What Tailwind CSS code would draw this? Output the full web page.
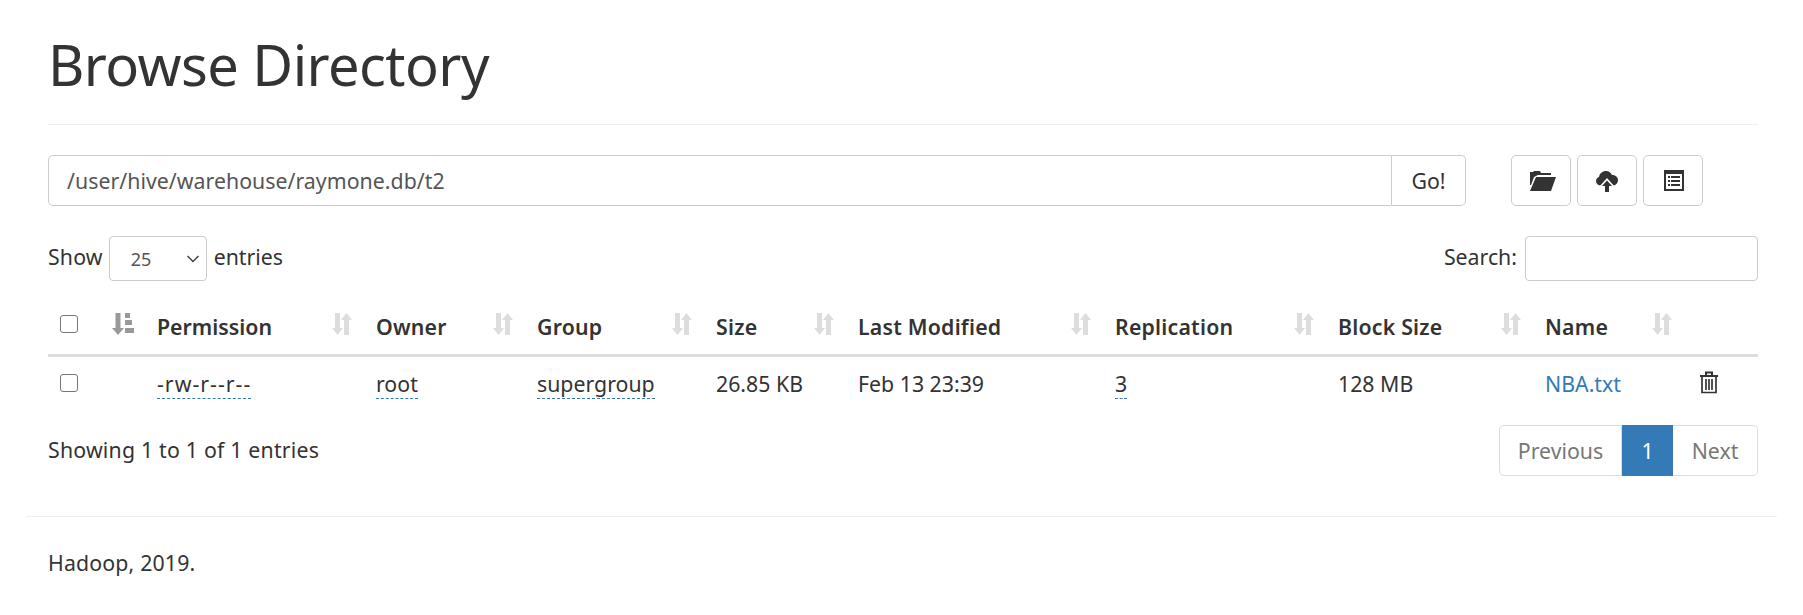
<!DOCTYPE html>
<html>
<head>
<meta charset="utf-8">
<script src="https://cdn.jsdelivr.net/npm/@tailwindcss/browser@4"></script>
</head>
<body class="bg-white text-[#333] font-['Noto_Sans',sans-serif] text-[21.3px] leading-[28px]">
<div class="w-[1803px] h-[615px] overflow-hidden">
  <div class="ml-[23px] mr-[23px] pl-[25px] pr-[22px]">
    <div class="pt-[31px] h-[125px] border-b border-[#eee]">
      <h1 class="text-[56px] leading-[66px] font-normal tracking-[-0.55px]">Browse Directory</h1>
    </div>
    <div class="flex mt-[30px] h-[51px]">
      <div class="flex w-[1418px]">
        <div class="flex-1 border border-[#ccc] rounded-l-[5px] px-[18px] flex items-center text-[#555] tracking-[0.03px]">/user/hive/warehouse/raymone.db/t2</div>
        <div class="w-[74px] border border-l-0 border-[#ccc] rounded-r-[5px] flex items-center justify-center">Go!</div>
      </div>
      <div class="flex gap-[6px] ml-[45px]">
        <div class="w-[60px] border border-[#ccc] rounded-[5px] flex items-center justify-center">
          <svg class="ml-[3px]" width="26" height="20" viewBox="0 0 26 20" fill="#333"><path d="M0 1h3l1-1h6l1 2h10v2H8L4 6 1 14H0zM6 6h20l-5 14H0z"/></svg>
        </div>
        <div class="w-[60px] border border-[#ccc] rounded-[5px] flex items-center justify-center">
          <svg width="22" height="22" viewBox="0 0 22 22"><path fill="#333" d="M5 15.500C2 15.500 0 13.500 0 11c0-2 1.300-3.500 3-4 .5-3.500 3.500-6 7-6 3 0 5 1.700 6 4 3.200-.2 6 2 6 5.200 0 3-2.500 5.300-5.500 5.300z"/><path fill="#fff" d="M11 8l8 9h-4v5H7v-5H3z"/><path fill="#333" d="M11 10.500l5 5.500h-3v6H9v-6H6z"/></svg>
        </div>
        <div class="w-[60px] border border-[#ccc] rounded-[5px] flex items-center justify-center">
          <svg class="ml-[1px]" width="20" height="21" viewBox="0 0 20 21"><path fill="#333" d="M0 0h20v21H0z"/><path fill="#fff" d="M2 4h16v15H2z"/><path fill="#333" d="M4 6h2v2H4zM7 6h9v2H7zM4 10h2v2H4zM7 10h9v2H7zM4 14h2v2H4zM7 14h9v2H7z"/></svg>
        </div>
      </div>
    </div>
    <div class="flex justify-between items-center mt-[30px] h-[45px]">
      <div class="flex items-center">
        <span class="pb-[4px] tracking-[0.15px]">Show</span>
        <div class="w-[98px] h-[45px] ml-[6px] mr-[7px] border border-[#ccc] rounded-[4px] flex items-center justify-between pl-[21px] pr-[6px] text-[18px] text-[#555]">
          <span>25</span>
          <svg width="14" height="8" viewBox="0 0 14 8" fill="none" stroke="#444" stroke-width="1.500"><path d="M1.500 1l5.500 5.500L12.500 1"/></svg>
        </div>
        <span class="pb-[4px]">entries</span>
      </div>
      <div class="flex items-center">
        <span class="pb-[4px]">Search:</span>
        <div class="w-[233px] h-[45px] ml-[8px] border border-[#ccc] rounded-[4px]"></div>
      </div>
    </div>
    <table class="table-fixed w-[1710px] mt-[14px] border-collapse">
      <colgroup>
        <col class="w-[52px]"><col class="w-[45px]"><col class="w-[219px]"><col class="w-[161px]"><col class="w-[179px]"><col class="w-[142px]"><col class="w-[257px]"><col class="w-[223px]"><col class="w-[207px]"><col class="w-[154px]"><col>
      </colgroup>
      <thead>
        <tr class="h-[60px] border-b-[3px] border-[#ddd] text-left tracking-[0.2px]">
          <th class="pl-[12px] font-normal"><div class="w-[18px] h-[18px] border-[1.5px] border-[#767676] rounded-[3px]"></div></th>
          <th class="pl-[12px]"><svg width="22" height="22" viewBox="0 0 22 22" fill="#999"><path d="M3.500 0h5v15H12l-6 7-6-7h3.500z"/><path d="M13 0h5v5h-5zM13 7h7v5h-7zM13 15h9v5h-9z"/></svg></th>
          <th class="px-[12px] pt-[5px] font-semibold tracking-normal"><div class="flex justify-between items-center">Permission<svg class="-mt-[5px]" width="20" height="22" viewBox="0 0 20 22" fill="#ddd"><path d="M3 0h5v15h3l-5.500 7L0 15h3z"/><path d="M12 22h5V7h3L14.500 0 9 7h3z"/></svg></div></th>
          <th class="px-[12px] pt-[5px] font-semibold"><div class="flex justify-between items-center">Owner<svg class="-mt-[5px]" width="20" height="22" viewBox="0 0 20 22" fill="#ddd"><path d="M3 0h5v15h3l-5.500 7L0 15h3z"/><path d="M12 22h5V7h3L14.500 0 9 7h3z"/></svg></div></th>
          <th class="px-[12px] pt-[5px] font-semibold"><div class="flex justify-between items-center">Group<svg class="-mt-[5px]" width="20" height="22" viewBox="0 0 20 22" fill="#ddd"><path d="M3 0h5v15h3l-5.500 7L0 15h3z"/><path d="M12 22h5V7h3L14.500 0 9 7h3z"/></svg></div></th>
          <th class="px-[12px] pt-[5px] font-semibold"><div class="flex justify-between items-center">Size<svg class="-mt-[5px]" width="20" height="22" viewBox="0 0 20 22" fill="#ddd"><path d="M3 0h5v15h3l-5.500 7L0 15h3z"/><path d="M12 22h5V7h3L14.500 0 9 7h3z"/></svg></div></th>
          <th class="px-[12px] pt-[5px] font-semibold"><div class="flex justify-between items-center">Last Modified<svg class="-mt-[5px]" width="20" height="22" viewBox="0 0 20 22" fill="#ddd"><path d="M3 0h5v15h3l-5.500 7L0 15h3z"/><path d="M12 22h5V7h3L14.500 0 9 7h3z"/></svg></div></th>
          <th class="px-[12px] pt-[5px] font-semibold"><div class="flex justify-between items-center">Replication<svg class="-mt-[5px]" width="20" height="22" viewBox="0 0 20 22" fill="#ddd"><path d="M3 0h5v15h3l-5.500 7L0 15h3z"/><path d="M12 22h5V7h3L14.500 0 9 7h3z"/></svg></div></th>
          <th class="px-[12px] pt-[5px] font-semibold"><div class="flex justify-between items-center">Block Size<svg class="-mt-[5px]" width="20" height="22" viewBox="0 0 20 22" fill="#ddd"><path d="M3 0h5v15h3l-5.500 7L0 15h3z"/><path d="M12 22h5V7h3L14.500 0 9 7h3z"/></svg></div></th>
          <th class="pl-[12px] pr-[15px] pt-[5px] font-semibold"><div class="flex justify-between items-center">Name<svg class="-mt-[5px]" width="20" height="22" viewBox="0 0 20 22" fill="#ddd"><path d="M3 0h5v15h3l-5.500 7L0 15h3z"/><path d="M12 22h5V7h3L14.500 0 9 7h3z"/></svg></div></th>
          <th></th>
        </tr>
      </thead>
      <tbody>
        <tr class="h-[56px]">
          <td class="pl-[12px]"><div class="-mt-[2px] w-[18px] h-[18px] border-[1.5px] border-[#767676] rounded-[3px]"></div></td>
          <td></td>
          <td class="px-[12px]"><span class="border-b border-dashed border-[#337ab7] tracking-[1px]">-rw-r--r--</span></td>
          <td class="px-[12px]"><span class="border-b border-dashed border-[#337ab7]">root</span></td>
          <td class="px-[12px]"><span class="border-b border-dashed border-[#337ab7]">supergroup</span></td>
          <td class="px-[12px]">26.85 KB</td>
          <td class="px-[12px]">Feb 13 23:39</td>
          <td class="px-[12px]"><span class="border-b border-dashed border-[#337ab7]">3</span></td>
          <td class="px-[12px]">128 MB</td>
          <td class="px-[12px] text-[#337ab7]">NBA.txt</td>
          <td class="pl-[12px]"><svg class="-mt-[2px]" width="20" height="23" viewBox="0 0 20 23" fill="none" stroke="#333"><path stroke-width="2" d="M1 5h18M7 4V1.500h6V4"/><path stroke-width="1.700" d="M3 6v15.500h14V6M7 8v11M10 8v11M13 8v11"/></svg></td>
        </tr>
      </tbody>
    </table>
    <div class="flex justify-between items-center mt-[14px] h-[51px]">
      <div class="tracking-[0.2px] pb-[2px]">Showing 1 to 1 of 1 entries</div>
      <div class="flex h-[51px] text-[#777]">
        <div class="w-[123px] border border-[#ddd] rounded-l-[5px] flex items-center justify-center">Previous</div>
        <div class="w-[51px] bg-[#337ab7] text-white flex items-center justify-center">1</div>
        <div class="w-[85px] border border-l-0 border-[#ddd] rounded-r-[5px] flex items-center justify-center">Next</div>
      </div>
    </div>
  </div>
  <div class="mx-[26px] mt-[40px] border-t border-[#eee] pt-[32px] pl-[22px] tracking-[0.15px]">Hadoop, 2019.</div>
</div>
</body>
</html>
